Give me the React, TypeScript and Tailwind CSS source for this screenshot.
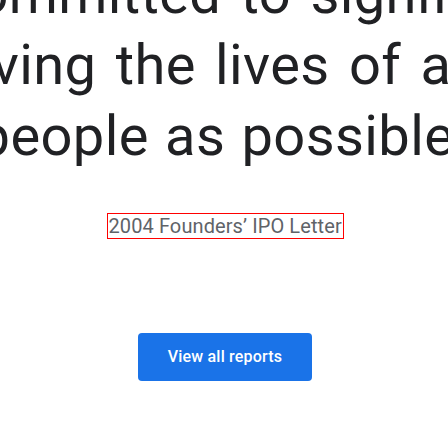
export default function App() {
  return (
    <div className="w-[448px] h-[448px] overflow-hidden bg-white" style={{ fontFamily: "Roboto, 'Open Sans', sans-serif" }}>
      <div className="w-[1000px] ml-[-275px] flex flex-col items-center">
        <h2 className="-mt-[41px] ml-[14px] text-center text-[56px] leading-[71px] tracking-[0.4px] [word-spacing:5px] font-normal text-[#202124] whitespace-nowrap">
          <span className="block">are committed to significantly</span>
          <span className="block pl-[20px]">improving the lives of as many</span>
          <span className="block pr-[16px] [word-spacing:2px]">people as possible.</span>
        </h2>
        <div className="mt-[41px] w-[237px] h-[26px] border border-[#ff0000] flex items-center overflow-visible">
          <span className="whitespace-nowrap text-[20px] leading-[24px] tracking-[0.1px] text-[#5f6368] pl-[1px]">2004 Founders’ IPO Letter</span>
        </div>
        <button className="mt-[94px] w-[174px] h-[48px] rounded-[4px] bg-[#1a73e8] text-white text-[16px] font-medium tracking-[0.2px]">
          View all reports
        </button>
      </div>
    </div>
  );
}
